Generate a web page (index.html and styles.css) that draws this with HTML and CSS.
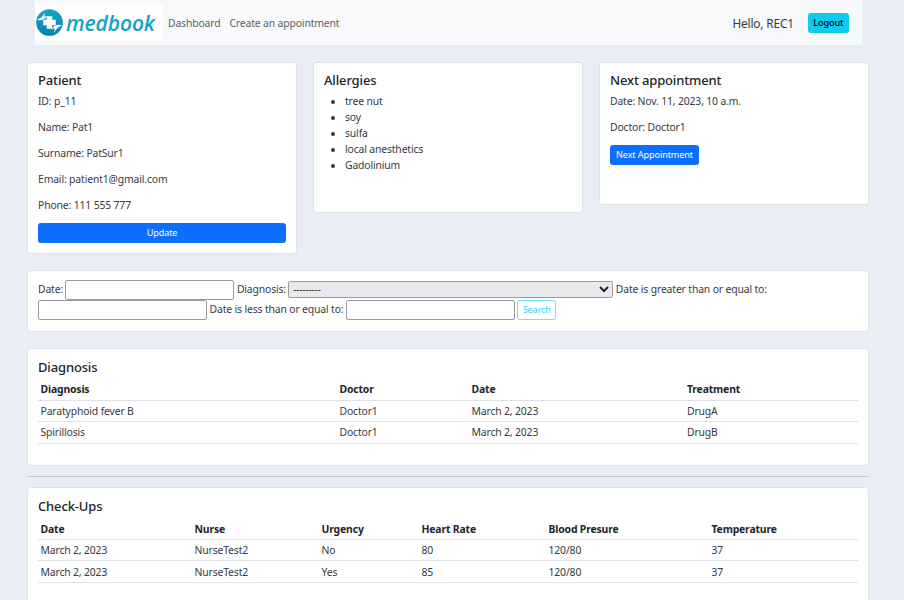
FILE: index.html
```html
<!DOCTYPE html>
<html lang="en">
<head>
<meta charset="utf-8">
<title>medbook</title>
<link rel="stylesheet" href="styles.css">
</head>
<body>
<nav class="navbar">
  <div class="brand">
    <svg class="brand-mark" viewBox="0 0 28 28" width="27" height="27" aria-hidden="true">
      <defs>
        <linearGradient id="markFill" x1="0" y1="0" x2="0" y2="1">
          <stop offset="0" stop-color="#12a6cd"/>
          <stop offset="1" stop-color="#0b7fb2"/>
        </linearGradient>
      </defs>
      <circle cx="14" cy="14" r="13.8" fill="url(#markFill)"/>
      <path d="M1 11 C4 10 7 8 9.5 3.5 L8.5 8 L12 7 C9 11.5 5 12.5 1 11Z" fill="#fff"/>
      <path d="M1 11 C4 10 7 8 9.5 3.5 L8.5 8 L12 7 C9 11.5 5 12.5 1 11Z" fill="#fff" transform="rotate(180 14 14)"/>
      <path d="M11.2 7.5 H16.8 V11.2 H20.5 V16.8 H16.8 V20.5 H11.2 V16.8 H7.5 V11.2 H11.2Z" fill="#fff"/>
    </svg>
    <span class="brand-text">medbook</span>
  </div>
  <a class="nav-link" href="#">Dashboard</a>
  <a class="nav-link" href="#">Create an appointment</a>
  <span class="nav-spacer"></span>
  <span class="hello">Hello, REC1</span>
  <a class="btn btn-logout" href="#">Logout</a>
</nav>

<main class="page">
  <section class="top-row">
    <div class="card card-patient">
      <h5>Patient</h5>
      <p>ID: p_11</p>
      <p>Name: Pat1</p>
      <p>Surname: PatSur1</p>
      <p>Email: patient1@gmail.com</p>
      <p>Phone: 111 555 777</p>
      <a class="btn btn-primary btn-block" href="#">Update</a>
    </div>
    <div class="card card-allergies">
      <h5>Allergies</h5>
      <ul>
        <li>tree nut</li>
        <li>soy</li>
        <li>sulfa</li>
        <li>local anesthetics</li>
        <li>Gadolinium</li>
      </ul>
    </div>
    <div class="card card-next">
      <h5>Next appointment</h5>
      <p>Date: Nov. 11, 2023, 10 a.m.</p>
      <p>Doctor: Doctor1</p>
      <a class="btn btn-primary" href="#">Next Appointment</a>
    </div>
  </section>

  <form class="card card-filter">
    <label>Date:</label>
    <input class="input" type="text">
    <label>Diagnosis:</label>
    <select class="select"><option>---------</option></select>
    <label>Date is greater than or equal to:</label>
    <input class="input" type="text">
    <label>Date is less than or equal to:</label>
    <input class="input" type="text">
    <button class="btn btn-search" type="button">Search</button>
  </form>

  <section class="card card-table card-diagnosis">
    <h5>Diagnosis</h5>
    <table>
      <colgroup><col class="d1"><col class="d2"><col class="d3"><col class="d4"></colgroup>
      <thead><tr><th>Diagnosis</th><th>Doctor</th><th>Date</th><th>Treatment</th></tr></thead>
      <tbody>
        <tr><td>Paratyphoid fever B</td><td>Doctor1</td><td>March 2, 2023</td><td>DrugA</td></tr>
        <tr><td>Spirillosis</td><td>Doctor1</td><td>March 2, 2023</td><td>DrugB</td></tr>
      </tbody>
    </table>
  </section>

  <hr class="rule">

  <section class="card card-table">
    <h5>Check-Ups</h5>
    <table>
      <colgroup><col class="c1"><col class="c2"><col class="c3"><col class="c4"><col class="c5"><col class="c6"></colgroup>
      <thead><tr><th>Date</th><th>Nurse</th><th>Urgency</th><th>Heart Rate</th><th>Blood Presure</th><th>Temperature</th></tr></thead>
      <tbody>
        <tr><td>March 2, 2023</td><td>NurseTest2</td><td>No</td><td>80</td><td>120/80</td><td>37</td></tr>
        <tr><td>March 2, 2023</td><td>NurseTest2</td><td>Yes</td><td>85</td><td>120/80</td><td>37</td></tr>
      </tbody>
    </table>
  </section>
</main>
</body>
</html>
```
FILE: styles.css
```css
* { box-sizing: border-box; }
html, body { height: 600px; overflow: hidden; }
body {
  margin: 0;
  background: #e9edf5;
  color: #343a40;
  font-family: "Noto Sans", "Open Sans", sans-serif;
  font-size: 10.4px;
  letter-spacing: -0.15px;
  line-height: 16px;
}
a { text-decoration: none; }
.navbar {
  display: flex;
  align-items: center;
  height: 45px;
  margin: 0 42px 0 35px;
  background: #f8f9fa;
}
.brand {
  display: flex;
  align-items: center;
  gap: 3px;
  align-self: flex-start;
  width: 128px;
  height: 35px;
  margin-top: 5px;
  margin-right: 0.5px;
  padding-left: 1px;
  background: #fff;
}
.brand-mark { flex: none; }
.brand-text {
  color: #10a3c8;
  font-family: "Open Sans", sans-serif;
  font-style: italic;
  font-weight: 600;
  font-size: 21px;
  line-height: 28px;
  letter-spacing: -0.1px;
}
.nav-link { color: #5c6166; padding: 0 4.5px; }
.nav-spacer { flex: 1; }
.hello { color: #343a40; font-size: 11.8px; margin-right: 14px; }
.btn {
  display: inline-block;
  border: 1px solid transparent;
  border-radius: 2.5px;
  font-family: inherit;
  font-size: 9.1px;
  line-height: 14px;
  padding: 2px 5px;
  text-align: center;
  letter-spacing: -0.1px;
}
.btn-logout { background: #0dcaf0; border-color: #0dcaf0; color: #000; margin-right: 13px; font-weight: 500; padding: 2px 4.5px; }
.btn-primary { background: #0d6efd; border-color: #0d6efd; color: #fff; }
.btn-block { display: block; }
.btn-search {
  background: #fff;
  border-color: #6fe0f6;
  color: #35d2f2;
  width: 39px;
  height: 20px;
  padding: 1px 0;
  vertical-align: middle;
}
.page { padding: 17px 35px 0 27px; }
.top-row {
  display: grid;
  grid-template-columns: 270px 270px 270px;
  gap: 16px;
  align-items: start;
  margin-bottom: 16px;
}
.card {
  display: block;
  background: #fff;
  border: 1px solid #dfe1e6;
  border-radius: 3.5px;
  padding: 10px;
}
h5 {
  margin: 0 0 4px;
  font-size: 13px;
  line-height: 15.6px;
  font-weight: 500;
  color: #212529;
}
p { margin: 0 0 10px; }
.card-allergies { height: 151px; }
.card-next { height: 143px; }
ul { margin: 0; padding-left: 21px; }
.card-filter { margin-bottom: 16px; height: 62px; line-height: 19.5px; padding: 9px 10px; }
.card-filter label { margin-right: -0.3px; }
.input {
  width: 169px;
  height: 19.5px;
  padding: 0 2px;
  border: 1px solid #9b9ba8;
  border-radius: 2px;
  background: #fff;
  vertical-align: middle;
  font: inherit;
}
.select {
  width: 325px;
  height: 17px;
  border: 1px solid #9b9ba8;
  border-radius: 2px;
  background: #e9e9ed;
  color: #212529;
  font-family: inherit;
  font-size: 9.5px;
  font-weight: 500;
  letter-spacing: 0;
  vertical-align: middle;
}
.card-table { margin-bottom: 10px; padding: 11px 10px 21px; }
table { width: 820px; border-collapse: collapse; table-layout: fixed; }
th, td { padding: 2.25px 2.5px; text-align: left; border-bottom: 1px solid #dee2e6; }
th { font-weight: 700; color: #212529; }
.d1 { width: 299px; } .d2 { width: 132px; } .d3 { width: 215.5px; } .d4 { width: 173.5px; }
.c1 { width: 154px; } .c2 { width: 127px; } .c3 { width: 100px; } .c4 { width: 127px; } .c5 { width: 163px; } .c6 { width: 149px; }
.rule { border: 0; border-top: 1px solid #c8ccd2; margin: 0 0 10px; }
```
